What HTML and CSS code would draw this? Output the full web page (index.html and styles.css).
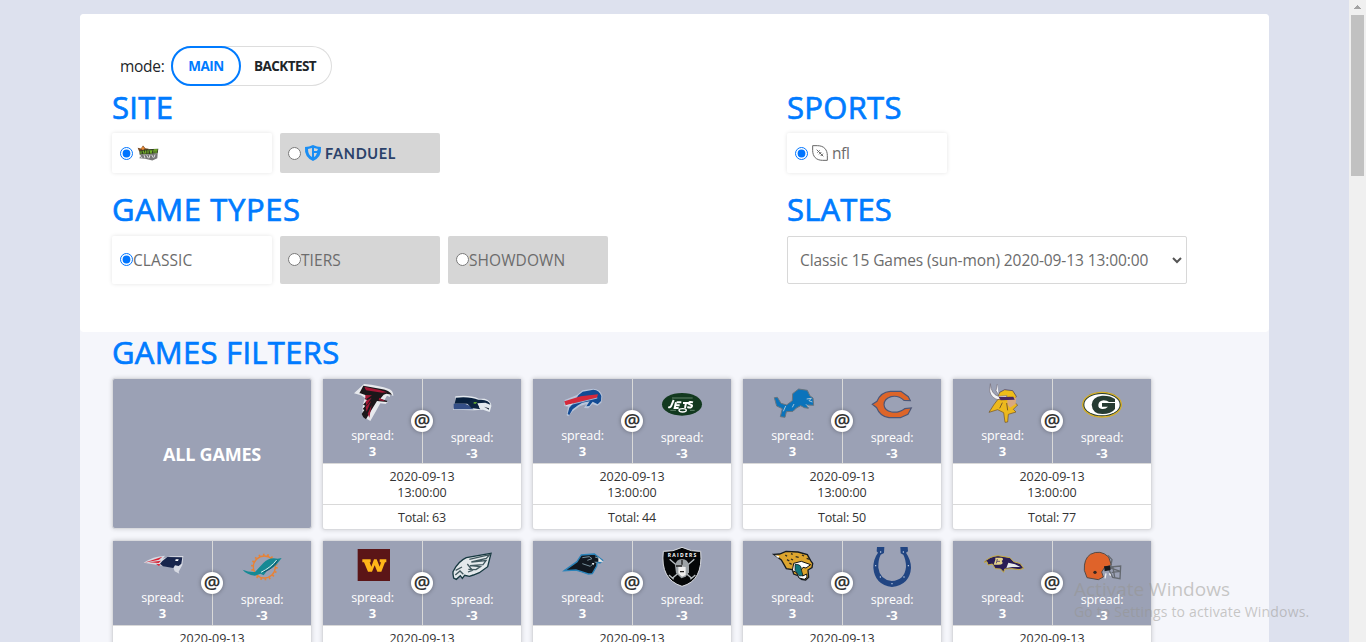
FILE: index.html
```html
<!DOCTYPE html>
<html lang="en">
<head>
<meta charset="utf-8">
<title>Games</title>
<link rel="stylesheet" href="styles.css">
</head>
<body>
<main class="page">
  <div class="container">
    <section class="panel">
      <div class="mode"><span class="mode-label">mode:</span><div class="toggle"><button class="toggle-btn active">MAIN</button><button class="toggle-btn second">BACKTEST</button></div></div>
      <div class="settings">
        <div class="group">
          <h2>SITE</h2>
          <div class="options">
            <label class="option selected"><input type="radio" name="site" checked>
              <svg class="dk" viewBox="0 0 66 50"><path d="M2 8l10 2 6-9 7 8 10 2-6 9-18 2-6-6z" fill="#7b4a22"/><path d="M12 9l6-5 5 6-5 5z" fill="#e98a35"/><path d="M7 17L28 12l36-1-2 14-54 4z" fill="#344022"/><path d="M12 18v8m6-9l4 9m4-10v9m7-10v10m6-10l3 9 3-9m6-1v9m0-9h11m-5 0v10" fill="none" stroke="#77b82c" stroke-width="3.5"/><path d="M12 29l50-4-1 14-15 7-22-5L7 39z" fill="#777"/><path d="M8 33l8 5m5-8l3 9m5-9l5 9m5-10l-3 10m8-10l5 9m5-10l-3 9" stroke="#ddd" stroke-width="3"/></svg>
            </label>
            <label class="option"><input type="radio" name="site">
              <svg class="fd" viewBox="0 0 92 18"><path d="M1 3Q5 3 9 1q4 2 8 2 1 10-8 14Q0 13 1 3z" fill="#1a8ef4"/><path d="M4 5l4-1v9Q4 11 4 5zM10 4l4 1-1 2h-3zM10 9h3q-1 3-3 4z" fill="#d6d6d6"/><text x="21" y="14.5" textLength="70" lengthAdjust="spacing">FANDUEL</text></svg>
            </label>
          </div>
        </div>
        <div class="group">
          <h2>SPORTS</h2>
          <div class="options"><label class="option selected"><input type="radio" name="sport" checked>
            <svg class="ball" viewBox="0 0 48 48" fill="none" stroke="#666" stroke-width="3"><path d="M2 2h14C36 2 46 14 46 32v14H32C12 46 2 34 2 16z"/><path d="M14 14l20 20M16 23l7-7M21 28l7-7M26 33l7-7"/></svg><span>nfl</span></label></div>
        </div>
        <div class="group types">
          <h2 class="t-types">GAME TYPES</h2>
          <div class="options tall">
            <label class="option selected"><input type="radio" name="type" checked><span>CLASSIC</span></label>
            <label class="option"><input type="radio" name="type"><span>TIERS</span></label>
            <label class="option"><input type="radio" name="type"><span>SHOWDOWN</span></label>
          </div>
        </div>
        <div class="group types">
          <h2 class="t-slates">SLATES</h2>
          <div class="select"><span>Classic 15 Games (sun-mon) 2020-09-13 13:00:00</span><svg viewBox="0 0 10 7"><path d="M1 1l4 4 4-4" fill="none" stroke="#555" stroke-width="2"/></svg></div>
        </div>
      </div>
    </section>
    <section class="games">
      <h2 class="t-filters">GAMES FILTERS</h2>
      <div class="cards">
        <div class="all">ALL GAMES</div>

        <article class="card"><div class="teams"><div class="team">
          <svg class="logo" viewBox="0 0 120 120"><path d="M3 31L33 3q46 4 75 15 13 5 13 21l-11-6 1 9-9-4-8 14 12 5-8 3 3 3-19-2-10 18-20 35-20-12q-9-25 4-57l-12-8z" fill="#e7e9ed"/><path d="M31 8l54 10q24 4 32 17l-17-3-8 3-10 12 22 7-3 3-29-3-18 29-15 26-8-6-5-10 8-12-5-3 8-10-7-3 13-13-8-5 10-8-23-8h-3z" fill="#1b171a"/><path d="M34 11l46 10 22 7-14 1-49-7zM37 36l20 1-20 13zM38 54l18-10-16 24zM38 72l16-18-13 32zM44 92l12-26-7 38zM79 44l18 11-20-3z" fill="#a31835"/></svg>
          <span>spread:</span><b>3</b></div><div class="team home">
          <svg class="logo" viewBox="0 0 120 120"><path d="M10 34q44-5 70 7h18q21 7 20 23l-5 17-20-7-28 2-62-2 8-20z" fill="#e3e8ee"/><path d="M12 38q44-4 67 7l-18 11H8z" fill="#071f3c"/><path d="M5 56h33q18 5 27 17H5z" fill="#344f87"/><path d="M45 55l17-11h25q25 2 28 15l-15-6-24 2 9 18-27-4z" fill="#0b2341"/><path d="M66 51l10 1-6 5-6-2z" fill="#63ad2e"/><path d="M82 59l14-1 17 8-2 9-17-6-12 1z" fill="#e3e8ee"/><path d="M96 65l15 5v4z" fill="#1c2737"/></svg>
          <span>spread:</span><b>-3</b></div><i class="at">@</i></div><div class="date">2020-09-13<br>13:00:00</div><div class="total">Total: 63</div></article>

        <article class="card"><div class="teams"><div class="team">
          <svg class="logo" viewBox="0 0 120 120"><path d="M5 51L42 36 59 22l32-5q23 3 27 22l-3 20-12 9-15-5-12 13-13-1 8-12-20 6-22 16-13 15-5-3 4-26-11-2z" fill="#b9c5da"/><path d="M46 37l13-11 32-6q18 1 24 19l-1 15-10 10-15-8-10 13-9 1 10-15-22 4-13 8-16 12-10 17-5-3 5-19 10-11z" fill="#124b94"/><path d="M4 55l49-15 52-6-3 10L8 67z" fill="#d5293b"/><path d="M9 68l94-23" stroke="#e6ebf2" stroke-width="2"/></svg>
          <span>spread:</span><b>3</b></div><div class="team home">
          <svg class="logo" viewBox="0 0 120 120"><ellipse cx="60" cy="58" rx="60" ry="34" fill="#12391f"/><path d="M19 66q6 3 9-4l7-17m7 7l-4 17h12m-8-8h11m-9-9h14m5 2h18m-9 0l-3 15m24-17q-12-4-13 4l10 5q1 10-14 5" fill="none" stroke="#fff" stroke-width="6"/><ellipse cx="62" cy="76" rx="11" ry="5" fill="none" stroke="#fff" stroke-width="4"/><path d="M30 39h62M25 76h17m42 0h14" stroke="#608269" stroke-width="3"/></svg>
          <span>spread:</span><b>-3</b></div><i class="at">@</i></div><div class="date">2020-09-13<br>13:00:00</div><div class="total">Total: 44</div></article>

        <article class="card"><div class="teams"><div class="team">
          <svg class="logo" viewBox="0 0 120 120"><path d="M4 44l9-1 11 18 17 5 17-13 1-21 18-14 26 4 8 17 9 6 2 22-19-1 3 10-12-2-11-6-13 7-10 10-20 1-4 17-14-2 6-24-17-8z" fill="#0b73bb" stroke="#68747e" stroke-width="3"/><path d="M101 48l14-2-7 7 10 4M38 69l-7 16m32-22l-5 10m49-1l-8-8" fill="none" stroke="#c5d2dc" stroke-width="2.5"/></svg>
          <span>spread:</span><b>3</b></div><div class="team home">
          <svg class="logo" viewBox="0 0 120 120"><path d="M1 58l14-9Q26 21 55 19h32l22 16 6 12-19-1Q79 30 57 35 36 42 36 59q1 17 23 22 22 3 39-10l20-2-10 19-23 10H51Q24 94 14 68z" fill="#dd6529" stroke="#4c5777" stroke-width="3.5"/></svg>
          <span>spread:</span><b>-3</b></div><i class="at">@</i></div><div class="date">2020-09-13<br>13:00:00</div><div class="total">Total: 50</div></article>

        <article class="card"><div class="teams"><div class="team">
          <svg class="logo" viewBox="0 0 120 120"><path d="M44 42l6-14 15-8 24 3 11 17-7 12-11 5z" fill="#eebd19" stroke="#423053" stroke-width="2"/><path d="M22 2q2 31 24 38l26-2-5 12-20 1Q24 45 20 24zM43 3l-4 20 8 13" fill="#f4f4f6" stroke="#77707a" stroke-width="2"/><path d="M44 50l-12 16-14 22 26-8 18 9 4 29 8-1 2-23 23-7-8-8 13-13-10-8-13-15z" fill="#edb91d" stroke="#71501f" stroke-width="2"/><path d="M73 42l17 5 10-5-2 21-17 11-8-10z" fill="#d8a881"/><path d="M47 42l44-1 4 9-42 2z" fill="#49285f"/><path d="M71 60l3 22m-16-23l-8 17" stroke="#7c5b26" stroke-width="3"/></svg>
          <span>spread:</span><b>3</b></div><div class="team home">
          <svg class="logo" viewBox="0 0 120 120"><ellipse cx="60" cy="59" rx="58" ry="37" fill="#263b32" stroke="#d5af2a" stroke-width="4"/><ellipse cx="60" cy="59" rx="53" ry="32" fill="#fff"/><path d="M99 42Q85 31 60 32 30 36 29 59q2 27 32 28 27 0 38-15V54H60v11h18q-7 8-18 7-12-2-11-13 2-12 16-13 10 0 16 5h18z" fill="#263b32"/></svg>
          <span>spread:</span><b>-3</b></div><i class="at">@</i></div><div class="date">2020-09-13<br>13:00:00</div><div class="total">Total: 77</div></article>

        <article class="card"><div class="teams"><div class="team">
          <svg class="logo" viewBox="0 0 120 120"><path d="M2 53q28-19 64-21l-7 9 24-7 38-1-3 27-11 20 2 6-14-7-5-14-22-1z" fill="#d7dae3"/><path d="M58 48l15-12 45 1-3 19-8 7-11-2-5 8-31-5-9-8z" fill="#18254c"/><path d="M4 53l54-18-10 9zM18 52l36-5-7 7zM38 56l15 2-5 5z" fill="#d92335"/><path d="M98 43h9l-2 5h-8z" fill="#fff"/></svg>
          <span>spread:</span><b>3</b></div><div class="team home">
          <svg class="logo" viewBox="0 0 120 120"><circle cx="67" cy="60" r="33" fill="none" stroke="#e88235" stroke-width="4"/><circle cx="67" cy="60" r="37" fill="none" stroke="#e88235" stroke-width="6" stroke-dasharray="5 8"/><path d="M2 68q18 8 37 7l25-27q17-19 43-13l12-2-10 13Q97 63 75 71l-10 14-10-5-16 6Q12 82 2 68z" fill="#168994"/><path d="M104 39Q87 61 57 76" fill="none" stroke="#d7f0ed" stroke-width="3"/><path d="M107 40Q92 66 65 75" fill="none" stroke="#154b67" stroke-width="3"/></svg>
          <span>spread:</span><b>-3</b></div><i class="at">@</i></div><div class="date">2020-09-13<br>13:00:00</div><div class="total">Total: 49</div></article>

        <article class="card"><div class="teams"><div class="team">
          <svg class="logo" viewBox="0 0 120 120"><path d="M14 12h97v96H14z" fill="#5b1517"/><path d="M28 43h25v9h-3l5 13 8-22h8l9 22 4-13h-4v-9h20v9h-4L85 80H73l-8-19-8 19H45L33 52h-5z" fill="#ffb619"/></svg>
          <span>spread:</span><b>3</b></div><div class="team home">
          <svg class="logo" viewBox="0 0 120 120"><path d="M3 74q15-31 40-42l74-13-10 40-25 18-18 7-12 4-14-3-7 9-6-8-12 11-8-4-2-12z" fill="#e3e8eb" stroke="#163840" stroke-width="4"/><path d="M52 37l61-14-10 11-45 11 44-4-9 12-39 3 31 3-13 9-23-1M46 51l15 19-13 5m-37-5l19-10M10 84l14-12 10 10" fill="none" stroke="#41585f" stroke-width="4"/></svg>
          <span>spread:</span><b>-3</b></div><i class="at">@</i></div><div class="date">2020-09-13<br>13:00:00</div><div class="total">Total: 45</div></article>

        <article class="card"><div class="teams"><div class="team">
          <svg class="logo" viewBox="0 0 120 120"><path d="M4 77l38-27 13-20 39-3 12 9 13 10-8 8-9-2-1 11-13 23-12 1-21-7-16-5z" fill="#111820" stroke="#2b83b9" stroke-width="4"/><path d="M58 38l21-3 8 6-14 5m23-10l10 3M95 51l8 2M58 56l24 8 8-8" fill="none" stroke="#78919d" stroke-width="3"/><path d="M106 37l15 13-15 1zM86 54l5 7 3-7z" fill="#e5e9ec"/></svg>
          <span>spread:</span><b>3</b></div><div class="team home">
          <svg class="logo" viewBox="0 0 120 120"><path d="M4 13q30 2 56-12 28 14 56 12 8 88-56 105Q-6 97 4 13z" fill="#050708" stroke="#d9dbe0" stroke-width="3"/><path d="M23 37l66 57M97 37L31 94M21 84l14 13m50 0l15-13" stroke="#b8bec2" stroke-width="4"/><path d="M39 56q3-20 21-20t21 20v20L71 89 58 94 42 78z" fill="#9ca2a6"/><path d="M49 58l22 2v24l-11 5-11-10z" fill="#eee"/><path d="M42 57h18M60 38v15M54 74h12" stroke="#222" stroke-width="4"/><text x="60" y="31" text-anchor="middle" textLength="86">RAIDERS</text></svg>
          <span>spread:</span><b>-3</b></div><i class="at">@</i></div><div class="date">2020-09-13<br>13:00:00</div><div class="total">Total: 51</div></article>

        <article class="card"><div class="teams"><div class="team">
          <svg class="logo" viewBox="0 0 120 120"><path d="M2 28l18-1 19-8 36 2 28 8 10 18 6 8-2 13-12 7 2 22-9 8-13-2-8-10-15-6-4-13-18-3-15-26z" fill="#dda52e" stroke="#151b20" stroke-width="4"/><path d="M62 55l23-6 28 10-14 10-9-2-7 10 6 16 12-6 1 10-8 6-16-4-8-17-12-5z" fill="#fff" stroke="#111" stroke-width="3"/><path d="M66 58q20-1 19 16l5 18-11 1-13-17z" fill="#11777b" stroke="#111" stroke-width="2"/><path d="M37 30l5 4m12-8l5 2m-17 16l7 4m19-13l9 2m10-7l6 3m8 7l9 3M54 42l6 3m-11 9l7 4" stroke="#2b2820" stroke-width="4"/><path d="M5 30l14 4-3 6z" fill="#fff"/></svg>
          <span>spread:</span><b>3</b></div><div class="team home">
          <svg class="logo" viewBox="0 0 120 120"><path d="M15 0h22l-1 18-10 5q-8 17-7 39 4 35 40 40 39-2 43-42 0-22-8-37l-8-4-1-19h22l1 13-6 4q15 22 15 45-3 51-57 58Q8 113 4 62 4 36 18 17l-4-4z" fill="#214582"/><g fill="#d8e3f4"><circle cx="26" cy="15" r="2"/><circle cx="94" cy="15" r="2"/><circle cx="11" cy="56" r="2"/><circle cx="109" cy="56" r="2"/><circle cx="25" cy="90" r="2"/><circle cx="96" cy="90" r="2"/><circle cx="60" cy="110" r="2"/></g></svg>
          <span>spread:</span><b>-3</b></div><i class="at">@</i></div><div class="date">2020-09-13<br>13:00:00</div><div class="total">Total: 46</div></article>

        <article class="card"><div class="teams"><div class="team">
          <svg class="logo" viewBox="0 0 120 120"><path d="M3 52q16-18 42-20l36 6 11 12 20 6 10 14-14 4-21-3-22 1-3 10-9-10-16-1-9-14-13 3-3-10z" fill="#2a1d55" stroke="#c8ae43" stroke-width="3"/><path d="M76 53l20 5 16 8-24 0-18 3z" fill="#e6e9eb"/><path d="M37 38h18q10 3 1 10 9 11-10 11H32l5-15z" fill="#e4d28a"/><path d="M43 42l-3 13m2-6h9" stroke="#665477" stroke-width="3"/></svg>
          <span>spread:</span><b>3</b></div><div class="team home">
          <svg class="logo" viewBox="0 0 120 120"><path d="M15 92L7 70Q5 36 25 22q30-16 55 8l8 24-20 7-9 14 5 15-15 8z" fill="#df632a" stroke="#574b46" stroke-width="3"/><path d="M78 25l12 13-4 22 30-3-2 38-22-4-15-31 38 13-26 3m4-15l5 30" fill="none" stroke="#646970" stroke-width="4"/><path d="M66 58l18-2 2 13-18 4z" fill="#15191d"/><circle cx="39" cy="76" r="5" fill="#352621"/><path d="M72 79l-3 15m13-15l4 7" stroke="#eee" stroke-width="4"/></svg>
          <span>spread:</span><b>-3</b></div><i class="at">@</i></div><div class="date">2020-09-13<br>13:00:00</div><div class="total">Total: 48</div></article>
      </div>
    </section>
  </div>
</main>
<aside class="scrollbar"><svg viewBox="0 0 7 4" shape-rendering="crispEdges"><path d="M3 0h1v1h1v1h1v1h1v1H0V3h1V2h1V1h1z" fill="#a3a3a3"/></svg><div class="thumb"></div></aside>
<div class="watermark"><div class="wm-title">Activate Windows</div><div class="wm-sub">Go to Settings to activate Windows.</div></div>
</body>
</html>
```
FILE: styles.css
```css
* { box-sizing: border-box; }
body {
  margin: 0; width: 1366px; height: 642px; overflow: hidden; display: flex;
  position: relative; background: #dde1ee; color: #212529;
  font: 15.5px/24px "Open Sans", "Noto Sans", sans-serif;
}
.page { flex: 1; padding: 14px 80px 0; height: 642px; overflow: hidden; }
.container { width: 1189px; height: 800px; background: #f5f6fb; border-radius: 4px; }
.panel { height: 318px; background: #fff; border-radius: 4px; padding: 32px 32px 0; }
.mode { display: flex; align-items: center; height: 40px; padding-left: 8px; }
.mode-label { width: 51px; letter-spacing: -.3px; white-space: nowrap; }
.toggle { display: flex; width: 161px; height: 40px; border-radius: 20px; box-shadow: inset 0 0 0 1px #ddd; }
.toggle-btn { height: 40px; padding: 0; border: 0; background: none; color: #212529; font: 700 13.5px/20px "Open Sans", sans-serif; letter-spacing: -.55px; }
.toggle-btn.active { width: 70px; color: #007bff; border: 2px solid #007bff; border-radius: 20px; background: #fff; }
.toggle-btn.second { width: 88px; }
.settings { display: grid; grid-template-columns: 675px 400px; }
.group { height: 102px; padding-top: 2px; }
.types { height: 112px; }
h2 { margin: 0; height: 38px; font: 500 31px/38px "Open Sans", "Noto Sans", sans-serif; letter-spacing: .3px; -webkit-text-stroke: .7px #007bff; color: #007bff; white-space: nowrap; }
.t-types { letter-spacing: .6px; }
.t-slates { letter-spacing: .15px; }
.options { display: flex; gap: 8px; margin-top: 7px; }
.types .options, .select { margin-top: 8px; }
.option { width: 160px; height: 40px; padding-left: 8px; display: flex; align-items: center; background: #d6d6d6; border-radius: 2px; color: #6c6c6c; letter-spacing: -.4px; }
.tall .option { height: 48px; letter-spacing: .08px; }
.selected { background: #fff; box-shadow: 0 0 4px rgba(0,0,0,.11); }
.option input { width: 13px; height: 13px; margin: 0; }
.tall input { position: relative; top: -1px; }
.dk { width: 22px; height: 17px; margin-left: 4px; }
.fd { width: 92px; height: 18px; margin-left: 3px; }
.fd text { font: 700 14.5px Lato, sans-serif; fill: #2b426a; }
.ball { width: 16px; height: 16px; margin: 0 4px 0 4px; }
.select { width: 400px; height: 48px; display: flex; align-items: center; justify-content: space-between; padding: 0 4px 0 12px; border: 1px solid #d8d8d8; border-radius: 2px; color: #6c6c6c; white-space: nowrap; letter-spacing: -.09px; }
.select svg { width: 10px; height: 7px; }
.games { padding: 1px 32px 0; }
.cards { display: grid; grid-template-columns: repeat(5, 200px); column-gap: 10px; row-gap: 10px; margin-top: 7px; align-items: start; }
.all, .card { border: 1px solid #d9dade; border-radius: 3px; box-shadow: 0 0 4px rgba(0,0,0,.16); }
.all { height: 151px; background: #9ba1b5; color: #fff; font-weight: 700; font-size: 18px; text-align: center; line-height: 151px; letter-spacing: -.2px; }
.card { height: 152px; background: #fff; font-size: 12.5px; line-height: 16px; text-align: center; color: #333; }
.teams { position: relative; height: 85px; display: grid; grid-template-columns: 100px 98px; background: #9ba1b5; border-bottom: 1px solid #d9d9d9; color: #fff; }
.team { display: flex; flex-direction: column; align-items: center; padding-top: 4px; border-right: 1px solid #d9d9d9; letter-spacing: -.15px; }
.home { padding-top: 6px; border: 0; }
.team span, .team b { position: relative; z-index: 2; }
.team b { font-size: 13px; line-height: 15px; }
.logo { width: 40px; height: 40px; margin-bottom: 5px; overflow: visible; flex: none; }
.logo text { font: 700 15px "Open Sans", sans-serif; fill: #fff; }
.at { position: absolute; left: 88px; top: 31px; width: 22px; height: 22px; border-radius: 50%; background: #fff; color: #333; font: 600 18.5px/20px "Noto Sans", sans-serif; display: flex; justify-content: center; box-shadow: 0 0 4px rgba(0,0,0,.35); }
.date { height: 41px; padding-top: 5px; border-bottom: 1px solid #d9d9d9; letter-spacing: 0; }
.total { padding-top: 5px; letter-spacing: -.2px; }
.scrollbar { width: 17px; background: #f0f0f0; padding: 5px 2px 0; }
.scrollbar svg { display: block; width: 7px; height: 4px; margin: 0 0 6px 3px; }
.thumb { height: 161px; background: #c1c1c1; }
.watermark { position: absolute; z-index: 1; left: 1074px; top: 576px; color: rgba(150,148,142,.5); white-space: nowrap; }
.wm-title { font-size: 19px; line-height: 26px; }
.wm-sub { font-size: 14px; line-height: 20px; letter-spacing: .17px; }
```
